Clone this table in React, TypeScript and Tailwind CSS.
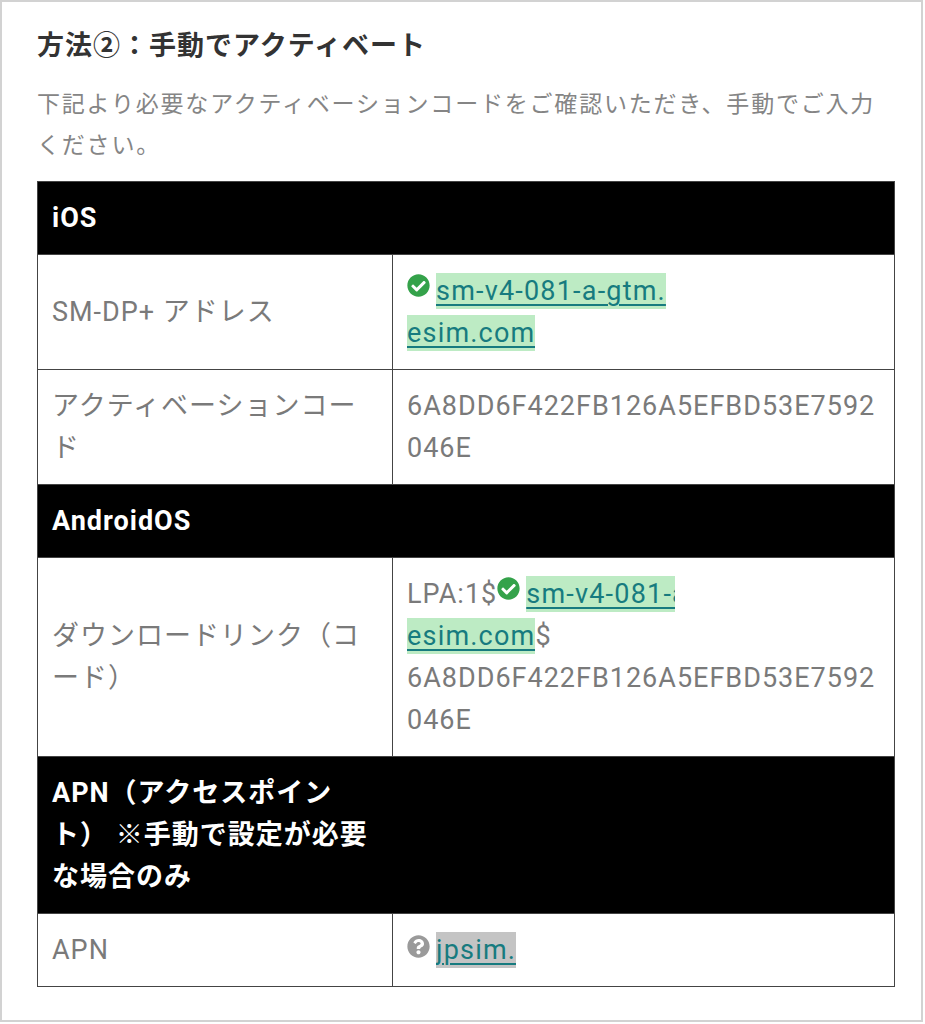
import { FaCheckCircle, FaQuestionCircle } from "react-icons/fa";

function Check() {
  return (
    <FaCheckCircle className="inline-block align-top mt-[4px] mr-[6px] text-[#34a24a]" size={23} />
  );
}

function Hl({ children, w, gray }: { children: React.ReactNode; w?: string; gray?: boolean }) {
  return (
    <span
      className={`inline-block align-top mt-[3px] h-[36px] leading-[36px] whitespace-nowrap overflow-hidden underline decoration-2 underline-offset-[4px] tracking-[1.2px] text-[#177b7f] decoration-[#177b7f] ${
        gray ? "bg-[#c4c4c4]" : "bg-[#bdebc4]"
      } ${w ?? ""}`}
    >
      {children}
    </span>
  );
}

export default function App() {
  return (
    <div className="w-[925px] h-[1024px] bg-white font-[Roboto,'Noto_Sans_CJK_JP',sans-serif]">
      <div className="w-[923px] h-[1022px] border-2 border-[#d2d2d2] pl-[35px] pt-[24px]">
        <h1 className="text-[27px] leading-[40px] font-bold text-[#333333] tracking-[1px]">
          方法②：手動でアクティベート
        </h1>
        <p className="mt-[18px] text-[23px] leading-[41px] text-[#858585] tracking-[1.8px] whitespace-nowrap">
          下記より必要なアクティベーションコードをご確認いただき、手動でご入力
          <br />
          ください。
        </p>
        <table className="mt-[15px] w-[858px] border-collapse table-fixed text-[27px] leading-[42px] tracking-[1px]">
          <colgroup>
            <col className="w-[355px]" />
            <col />
          </colgroup>
          <tbody>
            <tr className="bg-black">
              <th colSpan={2} className="text-left font-bold text-white px-[14px] py-[15px] border-[1.5px] border-[#444]">
                iOS
              </th>
            </tr>
            <tr>
              <td className="px-[14px] py-[15px] border-[1.5px] border-[#444] text-[#7a7a7a] whitespace-nowrap">
                SM-DP+ アドレス
              </td>
              <td className="px-[14px] py-[15px] border-[1.5px] border-[#444] text-[#7a7a7a] whitespace-nowrap">
                <Check />
                <Hl>sm-v4-081-a-gtm.</Hl>
                <br />
                <Hl>esim.com</Hl>
              </td>
            </tr>
            <tr>
              <td className="px-[14px] py-[15px] border-[1.5px] border-[#444] text-[#7a7a7a] whitespace-nowrap">
                アクティベーションコー
                <br />ド
              </td>
              <td className="px-[14px] py-[15px] border-[1.5px] border-[#444] text-[#7a7a7a] whitespace-nowrap">
                6A8DD6F422FB126A5EFBD53E7592
                <br />
                046E
              </td>
            </tr>
            <tr className="bg-black">
              <th colSpan={2} className="text-left font-bold text-white px-[14px] py-[15px] border-[1.5px] border-[#444]">
                AndroidOS
              </th>
            </tr>
            <tr>
              <td className="px-[14px] py-[15px] border-[1.5px] border-[#444] text-[#7a7a7a] whitespace-nowrap">
                ダウンロードリンク（コ
                <br />
                ード）
              </td>
              <td className="px-[14px] py-[15px] border-[1.5px] border-[#444] text-[#7a7a7a] whitespace-nowrap">
                LPA:1$
                <Check />
                <Hl w="w-[149px]">sm-v4-081-a-gtm.</Hl>
                <br />
                <Hl>esim.com</Hl>$
                <br />
                6A8DD6F422FB126A5EFBD53E7592
                <br />
                046E
              </td>
            </tr>
            <tr className="bg-black">
              <th colSpan={2} className="text-left font-bold text-white px-[14px] py-[15px] border-[1.5px] border-[#444] whitespace-nowrap">
                APN（アクセスポイン
                <br />
                ト） ※手動で設定が必要
                <br />
                な場合のみ
              </th>
            </tr>
            <tr>
              <td className="px-[14px] py-[15px] border-[1.5px] border-[#444] text-[#7a7a7a] whitespace-nowrap">
                APN
              </td>
              <td className="px-[14px] py-[15px] border-[1.5px] border-[#444] text-[#7a7a7a] whitespace-nowrap">
                <FaQuestionCircle className="inline-block align-top mt-[6px] mr-[6px] text-[#9a9a9a]" size={23} />
                <Hl gray>jpsim.</Hl>
              </td>
            </tr>
          </tbody>
        </table>
      </div>
    </div>
  );
}
